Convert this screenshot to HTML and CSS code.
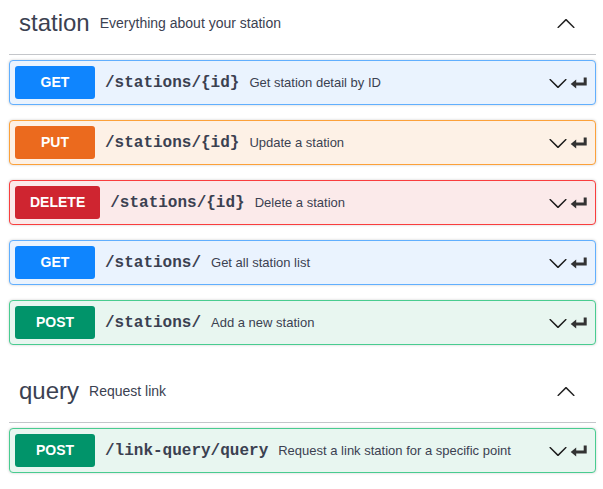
FILE: index.html
```html
<!DOCTYPE html>
<html lang="en">
<head>
<meta charset="utf-8">
<title>station API</title>
<link rel="stylesheet" href="styles.css">
</head>
<body>
<div class="page">
  <section class="tag-section">
    <h3 class="tag-header">
      <span class="tag-name">station</span>
      <small class="tag-desc">Everything about your station</small>
      <button class="tag-toggle" aria-label="Collapse operation">
        <svg width="20" height="20" viewBox="0 0 20 20"><path d="M17.418 14.908c.272.268.709.268.979 0s.271-.701 0-.969l-7.908-7.83c-.27-.268-.707-.268-.979 0l-7.908 7.83c-.27.268-.27.701 0 .969.271.268.709.268.979 0L10 7.767l7.418 7.141z"/></svg>
      </button>
    </h3>
    <div class="ops">
      <div class="opblock get">
        <div class="summary">
          <span class="method">GET</span>
          <span class="path">/stations/{id}</span>
          <span class="desc">Get station detail by ID</span>
          <span class="controls">
            <svg class="chev" width="20" height="20" viewBox="0 0 20 20"><path d="M17.418 6.109c.272-.268.709-.268.979 0s.271.701 0 .969l-7.908 7.83c-.27.268-.707.268-.979 0l-7.908-7.83c-.27-.268-.27-.701 0-.969.271-.268.709-.268.979 0L10 13.25l7.418-7.141z"/></svg>
            <svg class="jump" width="20" height="20" viewBox="0 0 20 20"><path d="M17.7 4.4V12.6H7.2V15.6L1.7 11.1L7.2 6.6V9.6H14.7V4.4Z"/></svg>
          </span>
        </div>
      </div>
      <div class="opblock put">
        <div class="summary">
          <span class="method">PUT</span>
          <span class="path">/stations/{id}</span>
          <span class="desc">Update a station</span>
          <span class="controls">
            <svg class="chev" width="20" height="20" viewBox="0 0 20 20"><path d="M17.418 6.109c.272-.268.709-.268.979 0s.271.701 0 .969l-7.908 7.83c-.27.268-.707.268-.979 0l-7.908-7.83c-.27-.268-.27-.701 0-.969.271-.268.709-.268.979 0L10 13.25l7.418-7.141z"/></svg>
            <svg class="jump" width="20" height="20" viewBox="0 0 20 20"><path d="M17.7 4.4V12.6H7.2V15.6L1.7 11.1L7.2 6.6V9.6H14.7V4.4Z"/></svg>
          </span>
        </div>
      </div>
      <div class="opblock delete">
        <div class="summary">
          <span class="method">DELETE</span>
          <span class="path">/stations/{id}</span>
          <span class="desc">Delete a station</span>
          <span class="controls">
            <svg class="chev" width="20" height="20" viewBox="0 0 20 20"><path d="M17.418 6.109c.272-.268.709-.268.979 0s.271.701 0 .969l-7.908 7.83c-.27.268-.707.268-.979 0l-7.908-7.83c-.27-.268-.27-.701 0-.969.271-.268.709-.268.979 0L10 13.25l7.418-7.141z"/></svg>
            <svg class="jump" width="20" height="20" viewBox="0 0 20 20"><path d="M17.7 4.4V12.6H7.2V15.6L1.7 11.1L7.2 6.6V9.6H14.7V4.4Z"/></svg>
          </span>
        </div>
      </div>
      <div class="opblock get">
        <div class="summary">
          <span class="method">GET</span>
          <span class="path">/stations/</span>
          <span class="desc">Get all station list</span>
          <span class="controls">
            <svg class="chev" width="20" height="20" viewBox="0 0 20 20"><path d="M17.418 6.109c.272-.268.709-.268.979 0s.271.701 0 .969l-7.908 7.83c-.27.268-.707.268-.979 0l-7.908-7.83c-.27-.268-.27-.701 0-.969.271-.268.709-.268.979 0L10 13.25l7.418-7.141z"/></svg>
            <svg class="jump" width="20" height="20" viewBox="0 0 20 20"><path d="M17.7 4.4V12.6H7.2V15.6L1.7 11.1L7.2 6.6V9.6H14.7V4.4Z"/></svg>
          </span>
        </div>
      </div>
      <div class="opblock post">
        <div class="summary">
          <span class="method">POST</span>
          <span class="path">/stations/</span>
          <span class="desc">Add a new station</span>
          <span class="controls">
            <svg class="chev" width="20" height="20" viewBox="0 0 20 20"><path d="M17.418 6.109c.272-.268.709-.268.979 0s.271.701 0 .969l-7.908 7.83c-.27.268-.707.268-.979 0l-7.908-7.83c-.27-.268-.27-.701 0-.969.271-.268.709-.268.979 0L10 13.25l7.418-7.141z"/></svg>
            <svg class="jump" width="20" height="20" viewBox="0 0 20 20"><path d="M17.7 4.4V12.6H7.2V15.6L1.7 11.1L7.2 6.6V9.6H14.7V4.4Z"/></svg>
          </span>
        </div>
      </div>
    </div>
  </section>

  <section class="tag-section">
    <h3 class="tag-header">
      <span class="tag-name">query</span>
      <small class="tag-desc">Request link</small>
      <button class="tag-toggle" aria-label="Collapse operation">
        <svg width="20" height="20" viewBox="0 0 20 20"><path d="M17.418 14.908c.272.268.709.268.979 0s.271-.701 0-.969l-7.908-7.83c-.27-.268-.707-.268-.979 0l-7.908 7.83c-.27.268-.27.701 0 .969.271.268.709.268.979 0L10 7.767l7.418 7.141z"/></svg>
      </button>
    </h3>
    <div class="ops">
      <div class="opblock post">
        <div class="summary">
          <span class="method">POST</span>
          <span class="path">/link-query/query</span>
          <span class="desc">Request a link station for a specific point</span>
          <span class="controls">
            <svg class="chev" width="20" height="20" viewBox="0 0 20 20"><path d="M17.418 6.109c.272-.268.709-.268.979 0s.271.701 0 .969l-7.908 7.83c-.27.268-.707.268-.979 0l-7.908-7.83c-.27-.268-.27-.701 0-.969.271-.268.709-.268.979 0L10 13.25l7.418-7.141z"/></svg>
            <svg class="jump" width="20" height="20" viewBox="0 0 20 20"><path d="M17.7 4.4V12.6H7.2V15.6L1.7 11.1L7.2 6.6V9.6H14.7V4.4Z"/></svg>
          </span>
        </div>
      </div>
    </div>
  </section>
</div>
</body>
</html>
```

FILE: styles.css
```css
html, body {
  margin: 0;
  padding: 0;
  background: #ffffff;
}

body {
  font-family: "Liberation Sans", Arial, Helvetica, sans-serif;
  color: #3b4151;
}

.page {
  padding: 0 7px 0 9px;
}

.tag-section + .tag-section {
  padding-top: 8px;
}

.tag-header {
  display: flex;
  align-items: center;
  margin: 0 0 5px;
  padding: 9px 20px 17px 10px;
  border-bottom: 1px solid rgba(59, 65, 81, 0.3);
  font-weight: 400;
}

.tag-name {
  font-size: 24px;
  line-height: 28px;
  color: #3b4151;
}

.tag-desc {
  margin-left: 10px;
  font-size: 14px;
  color: #3b4151;
}

.tag-toggle {
  margin-left: auto;
  padding: 0;
  border: none;
  background: none;
  width: 20px;
  height: 20px;
  display: flex;
}

.tag-toggle svg {
  fill: #222;
}

.opblock {
  margin: 0 0 15px;
  border: 1px solid;
  border-radius: 4px;
  box-shadow: 0 0 3px rgba(0, 0, 0, 0.19);
}

.summary {
  display: flex;
  align-items: center;
  padding: 5px;
}

.method {
  min-width: 80px;
  box-sizing: border-box;
  padding: 6px 15px;
  border-radius: 3px;
  font-size: 14px;
  line-height: 21px;
  font-weight: 700;
  text-align: center;
  color: #ffffff;
}

.path {
  padding: 0 10px;
  font-family: "Liberation Mono", "Courier New", monospace;
  font-size: 16px;
  font-weight: 700;
  color: #3b4151;
}

.desc {
  font-size: 13px;
  color: #3b4151;
}

.controls {
  margin-left: auto;
  margin-right: 1px;
  display: flex;
  align-items: center;
  gap: 1px;
}

.chev {
  fill: #1b1b1b;
}

.jump {
  fill: #333;
}

.opblock.get {
  background: #eaf3fe;
  border-color: #61affe;
}
.opblock.get .method {
  background: #0f85fe;
}

.opblock.put {
  background: #fdf1e6;
  border-color: #fca13a;
}
.opblock.put .method {
  background: #eb6a1e;
}

.opblock.delete {
  background: #fbeaea;
  border-color: #f93e3e;
}
.opblock.delete .method {
  background: #cf2530;
}

.opblock.post {
  background: #e8f6f0;
  border-color: #49cc90;
}
.opblock.post .method {
  background: #01946a;
}
```
